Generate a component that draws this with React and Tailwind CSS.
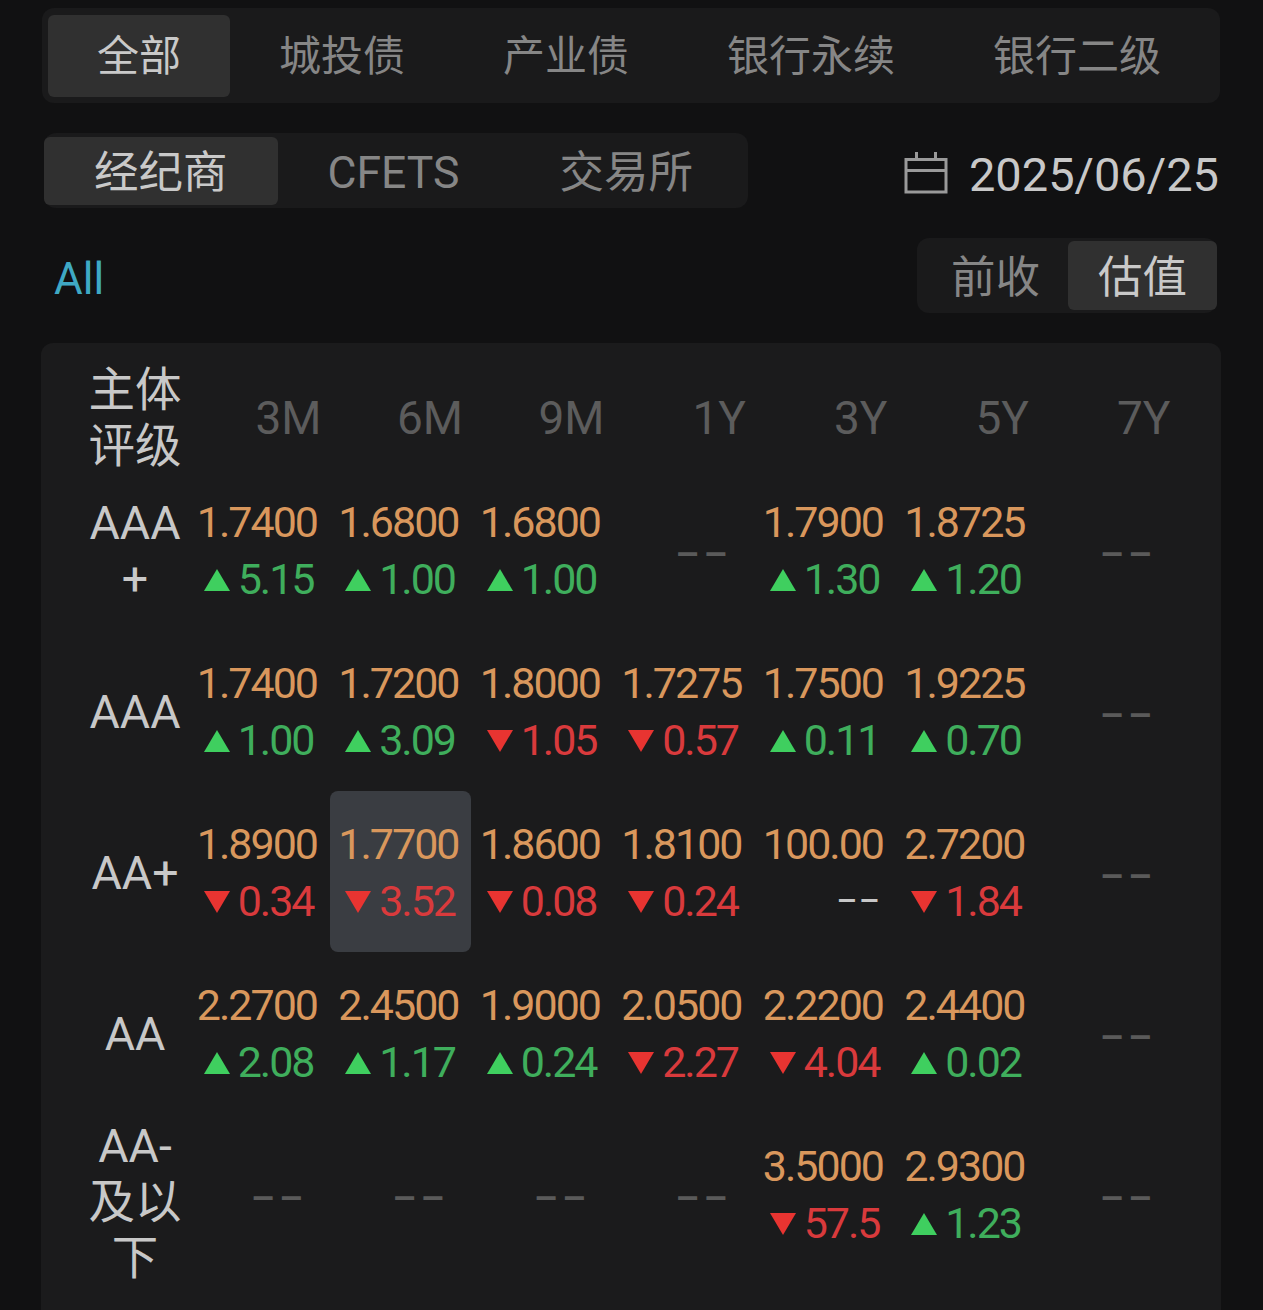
import React from 'react';

const cjk = '[font-family:Roboto,"Noto_Sans_CJK_SC",sans-serif]';

const tabs = ['全部', '城投债', '产业债', '银行永续', '银行二级'];
const sources = ['经纪商', 'CFETS', '交易所'];
const terms = ['3M', '6M', '9M', '1Y', '3Y', '5Y', '7Y'];

const rows = [
  {
    rating: 'AAA+',
    cells: [['1.7400', 'up', '5.15'], ['1.6800', 'up', '1.00'], ['1.6800', 'up', '1.00'], null, ['1.7900', 'up', '1.30'], ['1.8725', 'up', '1.20'], null],
  },
  {
    rating: 'AAA',
    cells: [['1.7400', 'up', '1.00'], ['1.7200', 'up', '3.09'], ['1.8000', 'down', '1.05'], ['1.7275', 'down', '0.57'], ['1.7500', 'up', '0.11'], ['1.9225', 'up', '0.70'], null],
  },
  {
    rating: 'AA+',
    cells: [['1.8900', 'down', '0.34'], ['1.7700', 'down', '3.52', true], ['1.8600', 'down', '0.08'], ['1.8100', 'down', '0.24'], ['100.00', 'none', ''], ['2.7200', 'down', '1.84'], null],
  },
  {
    rating: 'AA',
    cells: [['2.2700', 'up', '2.08'], ['2.4500', 'up', '1.17'], ['1.9000', 'up', '0.24'], ['2.0500', 'down', '2.27'], ['2.2200', 'down', '4.04'], ['2.4400', 'up', '0.02'], null],
  },
  {
    rating: 'AA-及以下',
    shifted: true,
    cells: [null, null, null, null, ['3.5000', 'down', '57.5'], ['2.9300', 'up', '1.23'], null],
  },
];

const Triangle = ({ dir }) => (
  <svg width="26" height="22" viewBox="0 0 26 22" className="shrink-0">
    {dir === 'up' ? (
      <path d="M13 0 L26 22 L0 22 Z" fill="#3fcf5f" />
    ) : (
      <path d="M0 0 L26 0 L13 22 Z" fill="#e83431" />
    )}
  </svg>
);

const Cell = ({ data }) => {
  if (!data) {
    return (
      <div className="w-[141.5px] h-[161px] shrink-0 flex items-center justify-end pr-[22px] pt-[12px]">
        <span className="text-[38px] font-medium tracking-[4px] text-[#5a5a5a]">––</span>
      </div>
    );
  }
  const [value, dir, change, active] = data;
  return (
    <div
      className={`w-[141.5px] h-[161px] shrink-0 flex flex-col items-end justify-center pt-[3px] pr-[13px] rounded-lg text-[43px] leading-[57px] tracking-[-2px] ${
        active ? 'bg-[#3a3d42]' : ''
      }`}
    >
      <div className="text-[#d9975c] -mr-[0.5px]">{value}</div>
      <div className="flex items-center gap-[8px] pr-[3px]">
        {dir === 'none' ? (
          <span className="-mr-[2px] text-[32px] font-medium tracking-[2px] text-[#c8c8c8]">––</span>
        ) : (
          <>
            <Triangle dir={dir} />
            <span className={dir === 'up' ? 'text-[#3fae5c]' : 'text-[#d93a3c]'}>{change}</span>
          </>
        )}
      </div>
    </div>
  );
};

export default function App() {
  return (
    <div className={`w-[1263px] h-[1310px] overflow-hidden bg-[#111112] pl-[42px] pt-[8px] ${cjk}`}>
      <div className="w-[1178px] h-[95px] flex items-center p-[6px] rounded-xl bg-[#1a1a1b] text-[42px] text-[#868686] whitespace-nowrap">
        {tabs.map((t, i) => (
          <div
            key={t}
            className={`h-[82px] shrink-0 pt-[2px] flex items-center px-[49px] rounded-md ${i === 0 ? 'bg-[#303030] text-[#c9c9c9]' : ''}`}
          >
            {t}
          </div>
        ))}
      </div>

      <div className="w-[1175px] h-[75px] mt-[30px] ml-[2px] flex items-center justify-between">
        <div className="h-[75px] w-[704px] flex items-start pt-[4px] rounded-xl bg-[#1a1a1b] text-[44.5px] text-[#868686]">
          {sources.map((s, i) => (
            <div
              key={s}
              className={`h-[68px] pt-[5px] flex items-center px-[50px] rounded-md ${i === 0 ? 'bg-[#303030] text-[#c9c9c9]' : ''}`}
            >
              {s}
            </div>
          ))}
        </div>
        <div className="flex items-center gap-[21px] text-[47px] text-[#c8c8c8]">
          <svg width="44" height="42" viewBox="0 0 44 42" fill="none" stroke="#9a9a9a" strokeWidth="3" className="mt-[5px]">
            <rect x="2" y="7.5" width="40" height="32.5" />
            <path d="M2 18.5 H42 M12.5 0 V8 M31.5 0 V8" />
          </svg>
          <span className="pt-[9px]">2025/06/25</span>
        </div>
      </div>

      <div className="w-[1174px] h-[75px] mt-[30px] ml-[1px] flex items-center justify-between">
        <div className="ml-[11px] pt-[7px] text-[44px] text-[#3fa9c4]">All</div>
        <div className="h-[75px] w-[300px] flex items-center justify-between py-[3px] rounded-xl bg-[#1a1a1b] text-[44.5px] text-[#868686]">
          <div className="pl-[34px] pt-[6px]">前收</div>
          <div className="h-[69px] w-[149px] pt-[6px] flex items-center justify-center rounded-md bg-[#303030] text-[#c9c9c9]">估值</div>
        </div>
      </div>

      <div className="w-[1180px] -ml-[1px] mt-[30px] pt-[24px] pb-[40px] pl-[47px] rounded-t-xl bg-[#1b1b1c]">
        <div className="h-[102px] flex items-center">
          <div className="w-[94px] mr-[6px] shrink-0 text-center text-[46.5px] leading-[56px] text-[#c8c8c8]">
            主体
            <br />
            评级
          </div>
          {terms.map((t) => (
            <div key={t} className="w-[141.5px] shrink-0 pr-[8px] text-right text-[46px] text-[#5c5c5c]">
              {t}
            </div>
          ))}
        </div>

        {rows.map((row) => (
          <div key={row.rating} className="flex h-[161px]">
            <div className="w-[94px] mr-[6px] shrink-0 flex items-center justify-center pt-[2px]">
              <div className={`w-full break-all text-center text-[46.5px] leading-[56px] text-[#c8c8c8] ${row.shifted ? 'mt-[15px]' : ''}`}>
                {row.rating}
              </div>
            </div>
            {row.cells.map((c, i) => (
              <Cell key={i} data={c} />
            ))}
          </div>
        ))}
      </div>
    </div>
  );
}
